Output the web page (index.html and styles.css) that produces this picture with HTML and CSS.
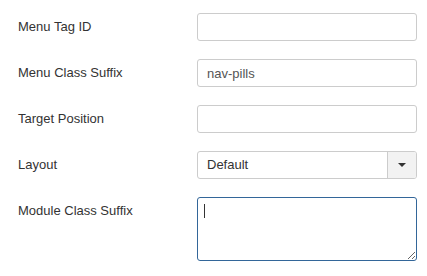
FILE: index.html
```html
<!DOCTYPE html>
<html>
<head>
<meta charset="utf-8">
<link rel="stylesheet" href="styles.css">
</head>
<body>
<form class="form">
  <div class="row">
    <label class="label">Menu Tag ID</label>
    <input class="input" type="text" value="">
  </div>
  <div class="row">
    <label class="label">Menu Class Suffix</label>
    <input class="input" type="text" value="nav-pills">
  </div>
  <div class="row">
    <label class="label">Target Position</label>
    <input class="input" type="text" value="">
  </div>
  <div class="row">
    <label class="label">Layout</label>
    <div class="select">
      <span class="select-text">Default</span>
      <span class="select-btn"><span class="caret"></span></span>
    </div>
  </div>
  <div class="row">
    <label class="label">Module Class Suffix</label>
    <div class="ta-wrap">
      <textarea class="textarea"></textarea>
      <span class="fake-caret"></span>
    </div>
  </div>
</form>
</body>
</html>
```
FILE: styles.css
```css
html, body {
  margin: 0;
  padding: 0;
  background: #fff;
}
body {
  font-family: "Liberation Sans", Arial, sans-serif;
  font-size: 13px;
  color: #333;
}
.form {
  display: flex;
  flex-direction: column;
  gap: 18px;
  padding: 13px 10px 0 18px;
}
.row {
  display: grid;
  grid-template-columns: 179px 220px;
  align-items: start;
}
.label {
  padding-top: 5px;
  line-height: 18px;
  color: #333;
}
.input {
  box-sizing: border-box;
  width: 220px;
  height: 28px;
  margin: 0;
  padding: 4px 9px;
  border: 1px solid #ccc;
  border-radius: 3px;
  font-family: "Liberation Sans", Arial, sans-serif;
  font-size: 13px;
  line-height: 18px;
  color: #555;
  background: #fff;
  outline: none;
}
.select {
  box-sizing: border-box;
  width: 220px;
  height: 28px;
  display: flex;
  border: 1px solid #ccc;
  border-radius: 3px;
  overflow: hidden;
  background: #fff;
}
.select-text {
  flex: 1;
  padding: 4px 9px;
  line-height: 18px;
  color: #333;
}
.select-btn {
  width: 28px;
  border-left: 1px solid #ccc;
  background: #f2f2f2;
  display: flex;
  align-items: center;
  justify-content: center;
}
.caret {
  width: 0;
  height: 0;
  border-left: 4px solid transparent;
  border-right: 4px solid transparent;
  border-top: 4px solid #333;
}
.ta-wrap {
  position: relative;
  width: 220px;
  height: 64px;
}
.textarea {
  box-sizing: border-box;
  display: block;
  width: 220px;
  height: 64px;
  margin: 0;
  padding: 4px 6px;
  border: 1px solid #336699;
  border-radius: 3px;
  font-family: "Liberation Sans", Arial, sans-serif;
  font-size: 13px;
  line-height: 18px;
  color: #555;
  background: #fff;
  outline: none;
  caret-color: transparent;
}
.fake-caret {
  position: absolute;
  left: 7px;
  top: 7px;
  width: 1px;
  height: 14px;
  background: #333;
}
```
